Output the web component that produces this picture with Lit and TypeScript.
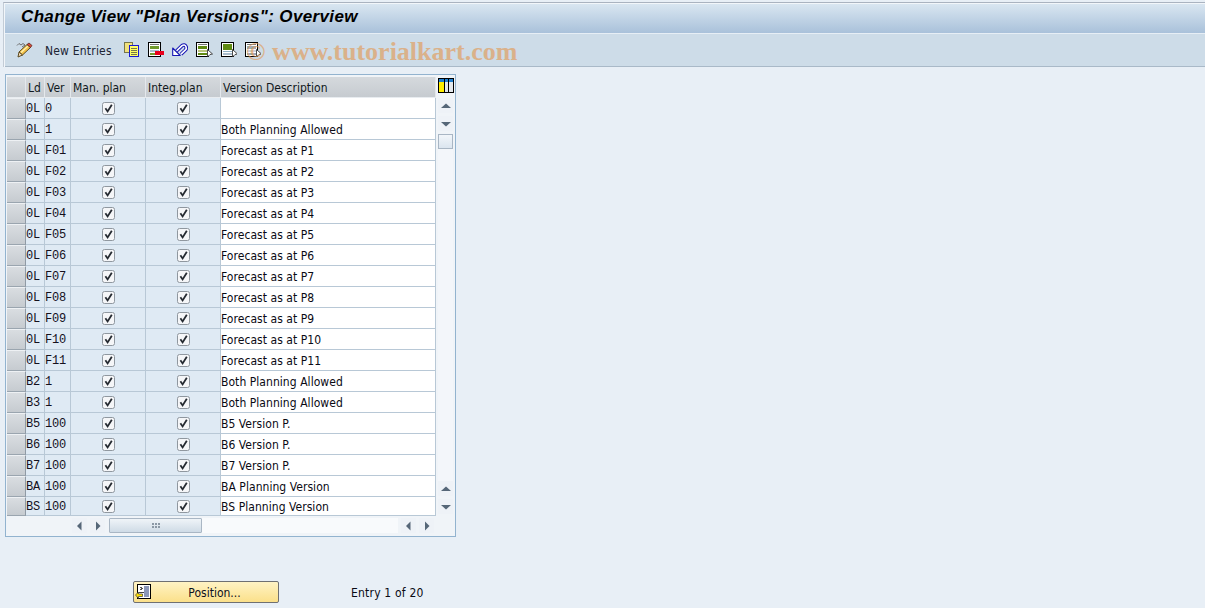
import { LitElement, html, css, svg } from "lit";
import { customElement } from "lit/decorators.js";

const rows: [string, string, string][] = [
  ["0L", "0", ""],
  ["0L", "1", "Both Planning Allowed"],
  ...Array.from({ length: 11 }, (_, i): [string, string, string] => [
    "0L",
    "F" + String(i + 1).padStart(2, "0"),
    "Forecast as at P" + (i + 1),
  ]),
  ["B2", "1", "Both Planning Allowed"],
  ["B3", "1", "Both Planning Allowed"],
  ["B5", "100", "B5 Version P."],
  ["B6", "100", "B6 Version P."],
  ["B7", "100", "B7 Version P."],
  ["BA", "100", "BA Planning Version"],
  ["BS", "100", "BS Planning Version"],
];

const ico = (w: number, h: number, body: unknown) => html`<svg class="ico" width=${w} height=${h} viewBox="0 0 ${w} ${h}">${body}</svg>`;

const pencil = ico(17, 16, svg`
  <path d="M1 3.5 L3 1.5 L5 3 L7 1.5 L9 3 L6 5" fill="none" stroke="#6d6d6d" stroke-width="1"/>
  <path d="M3 10 L11 2.5 L14.5 5.5 L6.5 13 Z" fill="#f4c24a" stroke="#5c4a20" stroke-width="1"/>
  <path d="M5 10.5 L12 4" stroke="#fff2b0" stroke-width="1.2"/>
  <path d="M3 10 L2 15 L6.5 13 Z" fill="#f5dcb8" stroke="#5c4a20" stroke-width="1"/>
  <path d="M11 2.5 L14.5 5.5 L16 3.5 L13 1 Z" fill="#d94a3a" stroke="#5c2a20" stroke-width=".8"/>
`);

const copy = ico(16, 15, svg`
  <g shape-rendering="crispEdges">
    <rect x=".5" y=".5" width="8" height="10" fill="#f2e27c" stroke="#77774a"/>
    <rect x="5.5" y="3.5" width="9" height="11" fill="#ffff66" stroke="#1a1ad0"/>
    <path d="M7 6h6M7 8h6M7 10h6M7 12h6" stroke="#77774a"/>
  </g>
`);

const page = (fill: string, alt: string) => svg`
  <rect x=".5" y=".5" width="12" height="14" fill="#fff" stroke="#000"/>
  <rect x="2" y="2" width="9" height="1" fill="#777"/>
  <rect x="2" y="4" width="9" height="3" fill=${fill}/>
  <rect x="2" y="8" width="9" height="2" fill=${alt}/>
  <rect x="2" y="11" width="9" height="2" fill=${fill}/>
`;

const delRow = ico(16, 16, svg`
  <g shape-rendering="crispEdges">
    ${page("#6f9a2c", "#a9bccc")}
    <rect x="7" y="9" width="9" height="4" fill="#e8001c"/>
  </g>
`);

const undo = ico(16, 15, svg`
  <path d="M4.5 9 L10 3.6 Q12.6 2 14 4.6 Q15 6.4 13.2 8.2 L9 12.2" fill="none" stroke="#1616b4" stroke-width="3.6"/>
  <path d="M4.5 9 L10 3.6 Q12.6 2 14 4.6 Q15 6.4 13.2 8.2 L9 12.2" fill="none" stroke="#fff" stroke-width="1.6"/>
  <path d="M.7 13.5 L.7 6 L8.2 13.5 Z" fill="#fff" stroke="#1616b4" stroke-width="1.1" stroke-linejoin="round"/>
`);

const cursor = svg`<path d="M11.5 7.5 L16.5 12 L14 12.5 L11.5 15 Z" fill="#fff" stroke="#222" stroke-width=".8"/>`;

const selAll = ico(17, 16, svg`<g shape-rendering="crispEdges">${page("#5f8a12", "#b9c47a")}</g>${cursor}`);
const selBlock = ico(16, 16, svg`<g shape-rendering="crispEdges">
  <rect x=".5" y=".5" width="12" height="14" fill="#fff" stroke="#000"/>
  <rect x="2" y="2" width="9" height="6" fill="#5f8a12"/>
  <rect x="2" y="9" width="9" height="1" fill="#8fb0c6"/>
  <rect x="2" y="11" width="9" height="2" fill="#a9bccc"/></g>${cursor}`);
const deSel = ico(16, 16, svg`<g shape-rendering="crispEdges">${page("#9aaab6", "#c9d3da")}</g>${cursor}`);

const columns = ico(16, 16, svg`
  <g shape-rendering="crispEdges">
    <rect x=".5" y=".5" width="15" height="14" fill="#fff" stroke="#000"/>
    <rect x="1" y="1" width="14" height="3" fill="#1e7fd0"/>
    <rect x="1" y="4" width="5" height="10" fill="#ffee00"/>
    <rect x="6" y="1" width="1" height="13" fill="#000"/>
    <rect x="10" y="1" width="1" height="13" fill="#000"/>
    <rect x="7" y="4" width="3" height="10" fill="#e4e8ec"/>
    <rect x="11" y="4" width="4" height="10" fill="#e4e8ec"/>
  </g>
`);

const check = svg`<svg class="cb" width="13" height="13" viewBox="0 0 13 13">
  <rect x=".5" y=".5" width="12" height="12" rx="2" fill="#f5f6f8" stroke="#8f979f"/>
  <path d="M3.4 6.2 L5.6 9.4 L9.8 2.8" fill="none" stroke="#252a31" stroke-width="1.8"/>
</svg>`;

const tri = (d: string) => html`<svg width="10" height="10" viewBox="0 0 10 10"><path d=${d} fill="#566778"/></svg>`;
const up = tri("M5 2.5 L10 7 L0 7 Z");
const down = tri("M0 3 L10 3 L5 7.5 Z");
const left = tri("M6.5 0.5 L6.5 9.5 L2 5 Z");
const right = tri("M3 0.5 L3 9.5 L7.5 5 Z");

const posIcon = ico(16, 16, svg`
  <g shape-rendering="crispEdges">
    <rect x="2.5" y=".5" width="13" height="14" fill="#fff" stroke="#000"/>
    <rect x="9" y="2" width="5" height="11" fill="#8b97b8"/>
    <rect x="4" y="8" width="5" height="1" fill="#444"/>
    <path d="M5 3h2M6 4h2M5 5h2" stroke="#555"/>
  </g>
  <path d="M.5 11 L3.5 8 L3.5 10 L7.5 10 L7.5 12.5 L3.5 12.5 L3.5 14.5 Z" fill="#ffe000" stroke="#333" stroke-width=".7"/>
`);

@customElement("app-root")
export class AppRoot extends LitElement {
  static styles = css`
    :host {
      display: block;
      width: 1205px;
      height: 608px;
      position: relative;
      overflow: hidden;
      background: #e8eff6;
      font-family: "DejaVu Sans Condensed", "DejaVu Sans", sans-serif;
      font-size: 12px;
      color: #0a0a14;
    }
    .page { display: flex; flex-direction: column; height: 100%; padding-top: 2px; box-sizing: border-box; }
    .head {
      margin-left: 3px;
      border-top: 1px solid #aab3c0;
      border-left: 1px solid #c3ccd6;
      padding: 1px 0 0 1px;
      background: #f2f6fa;
    }
    .title {
      height: 29px;
      box-sizing: border-box;
      padding: 0 0 3px 16px;
      background: linear-gradient(#d9e6f1, #a9c1da);
      display: flex;
      align-items: center;
      font: italic bold 17px "Liberation Sans", sans-serif;
      letter-spacing: 0.35px;
      color: #000;
    }
    .toolbar {
      height: 34px;
      box-sizing: border-box;
      background: #cddce8;
      border-top: 1px solid #e6eef5;
      border-bottom: 1px solid #a9b9c8;
      display: flex;
      align-items: center;
      padding: 0 0 1px 11px;
    }
    .ico { display: block; flex: none; }
    .new { margin: 0 12px 0 12px; padding-top: 2px; letter-spacing: 0.2px; color: #1c2433; }
    .tools { display: flex; gap: 8px; }
    .watermark {
      position: absolute;
      left: 246px;
      top: 37px;
      font: bold 26px "Liberation Serif", serif;
      color: #e3964c;
      opacity: 0.6;
      white-space: nowrap;
      pointer-events: none;
    }
    .main { flex: 1; margin: 7px 0 0 5px; display: flex; flex-direction: column; align-items: flex-start; }
    .box {
      width: 451px;
      height: 463px;
      box-sizing: border-box;
      border: 1px solid #92b3cf;
      background: #f0f4f8;
      padding: 2px 0 0 1px;
      display: grid;
      grid-template-columns: 429px 20px;
      grid-template-rows: 439px 1fr;
    }
    .table {
      display: grid;
      grid-template-columns: 19px 19px 26px 75px 75px 215px;
      grid-template-rows: 21px repeat(19, 21px) 19px;
      overflow: hidden;
      background: #dfeaf4;
    }
    .c {
      border-right: 1px solid #b8c8d6;
      border-bottom: 1px solid #b8c8d6;
      display: flex;
      align-items: center;
      box-sizing: border-box;
      padding-left: 1px;
      overflow: hidden;
      white-space: nowrap;
    }
    .h {
      background: linear-gradient(#d5d9dd, #c6cbd0);
      border-right: 1px solid #e4e8ec;
      border-bottom: 1px solid #e8ecf0;
      padding: 1px 0 0 2px;
      color: #101820;
    }
    .sel {
      padding: 0;
      background: linear-gradient(#d9dde1, #c6cbd0);
      border-right: 1px solid #8f9aa5;
      border-bottom: 1px solid #9aa5af;
      border-top: 1px solid #eef1f4;
    }
    .h.sel { border-right: 1px solid #e4e8ec; border-bottom: 1px solid #e8ecf0; border-top: 0; }
    .m { font-family: "Liberation Mono", monospace; font-size: 12px; letter-spacing: -0.2px; color: #14101c; padding: 1px 0 0 0; }
    .k { justify-content: center; }
    .d { background: #fff; padding: 1px 0 0 0; letter-spacing: 0.05px; }
    .vs { display: flex; flex-direction: column; align-items: center; padding: 1px 3px 2px 2px; width: 15px; box-sizing: content-box; }
    .corner { margin-bottom: 4px; }
    .btn { width: 15px; height: 15px; background: #eef2f7; display: flex; align-items: center; justify-content: center; flex: none; }
    .vs .btn + .btn { margin-top: 3px; }
    .vthumb { width: 13px; height: 13px; margin-top: 3px; border: 1px solid #a9b6c4; background: linear-gradient(#f2f6fa, #dbe5ef); flex: none; }
    .vtrack { flex: 1; width: 15px; background: #f3f6fa; }
    .hs { display: flex; align-items: center; padding: 0 0 1px 65px; gap: 3px; }
    .hthumb { width: 91px; height: 13px; margin-left: 1px; border: 1px solid #a9b6c4; border-radius: 1px; background: linear-gradient(#eff4f8, #cfdbe6); display: flex; align-items: center; justify-content: center; flex: none; }
    .grip { width: 8px; height: 5px; background: radial-gradient(circle at 1px 1px, #8b98a5 1px, transparent 1px) 0 0 / 3px 3px; }
    .htrack { width: 196px; height: 15px; margin-left: -3px; background: #f8fafc; flex: none; }
    .foot { display: flex; align-items: center; margin-top: 44px; padding-left: 128px; }
    .pos {
      width: 146px;
      height: 22px;
      box-sizing: border-box;
      border: 1px solid #6f7072;
      border-radius: 2px;
      background: linear-gradient(#fff3c4, #fbe08a);
      display: flex;
      align-items: center;
      padding-left: 1px;
    }
    .pos span { flex: 1; text-align: center; padding-top: 1px; color: #0c1020; }
    .entry { margin-left: 72px; padding-top: 1px; letter-spacing: 0.2px; }
  `;

  render() {
    return html`
      <div class="page">
        <div class="head">
          <div class="title">Change View "Plan Versions": Overview</div>
          <div class="toolbar">
            ${pencil}
            <span class="new">New Entries</span>
            <div class="tools">${copy}${delRow}${undo}${selAll}${selBlock}${deSel}</div>
          </div>
        </div>
        <div class="main">
          <div class="box">
            <div class="table">
              <div class="c h sel"></div>
              <div class="c h">Ld</div>
              <div class="c h">Ver</div>
              <div class="c h">Man. plan</div>
              <div class="c h">Integ.plan</div>
              <div class="c h">Version Description</div>
              ${rows.map(
                ([ld, ver, desc]) => html`
                  <div class="c sel"></div>
                  <div class="c m">${ld}</div>
                  <div class="c m">${ver}</div>
                  <div class="c k">${check}</div>
                  <div class="c k">${check}</div>
                  <div class="c d">${desc}</div>
                `
              )}
            </div>
            <div class="vs">
              <div class="corner">${columns}</div>
              <div class="btn">${up}</div>
              <div class="btn">${down}</div>
              <div class="vthumb"></div>
              <div class="vtrack"></div>
              <div class="btn">${up}</div>
              <div class="btn">${down}</div>
            </div>
            <div class="hs">
              <div class="btn">${left}</div>
              <div class="btn">${right}</div>
              <div class="hthumb"><div class="grip"></div></div>
              <div class="htrack"></div>
              <div class="btn">${left}</div>
              <div class="btn">${right}</div>
            </div>
          </div>
          <div class="foot">
            <div class="pos">${posIcon}<span>Position...</span></div>
            <div class="entry">Entry 1 of 20</div>
          </div>
        </div>
      </div>
      <div class="watermark">© www.tutorialkart.com</div>
    `;
  }
}
